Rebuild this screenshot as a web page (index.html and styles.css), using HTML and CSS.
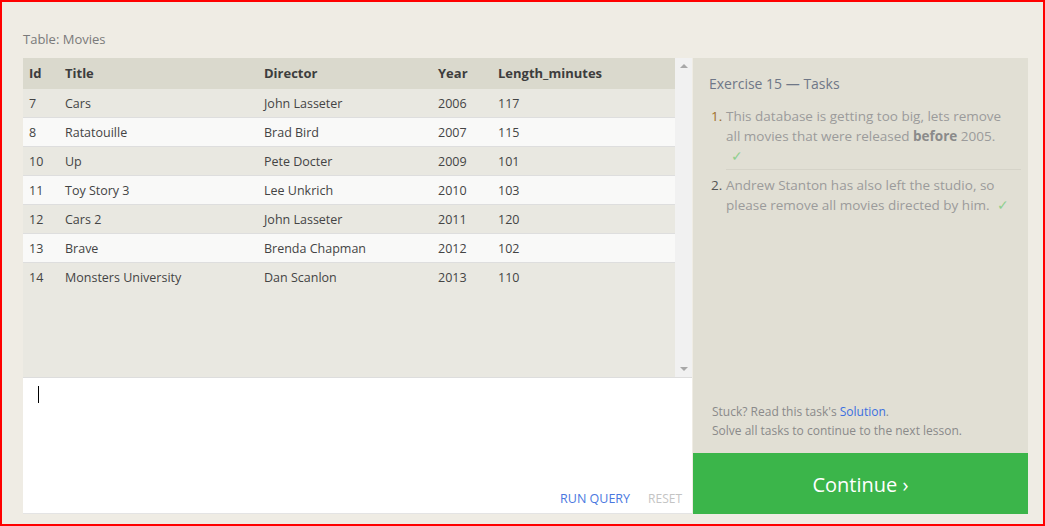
FILE: index.html
```html
<!DOCTYPE html>
<html>
<head>
<meta charset="utf-8">
<link rel="stylesheet" href="styles.css">
</head>
<body>
<div class="frame">
  <div class="layout">
    <div class="caption">Table: Movies</div>
    <div class="left">
      <div class="table-area">
        <div class="table-scroll">
          <table class="movies">
            <colgroup>
              <col class="c-id"><col class="c-title"><col class="c-dir"><col class="c-year"><col class="c-len">
            </colgroup>
            <thead>
              <tr><th>Id</th><th>Title</th><th>Director</th><th>Year</th><th>Length_minutes</th></tr>
            </thead>
            <tbody>
              <tr><td>7</td><td>Cars</td><td>John Lasseter</td><td>2006</td><td>117</td></tr>
              <tr><td>8</td><td>Ratatouille</td><td>Brad Bird</td><td>2007</td><td>115</td></tr>
              <tr><td>10</td><td>Up</td><td>Pete Docter</td><td>2009</td><td>101</td></tr>
              <tr><td>11</td><td>Toy Story 3</td><td>Lee Unkrich</td><td>2010</td><td>103</td></tr>
              <tr><td>12</td><td>Cars 2</td><td>John Lasseter</td><td>2011</td><td>120</td></tr>
              <tr><td>13</td><td>Brave</td><td>Brenda Chapman</td><td>2012</td><td>102</td></tr>
              <tr><td>14</td><td>Monsters University</td><td>Dan Scanlon</td><td>2013</td><td>110</td></tr>
            </tbody>
          </table>
        </div>
        <div class="scrollbar">
          <span class="arrow up"></span>
          <span class="arrow down"></span>
        </div>
      </div>
      <div class="editor">
        <div class="caret"></div>
        <div class="editor-actions">
          <span class="run">RUN QUERY</span>
          <span class="reset">RESET</span>
        </div>
      </div>
    </div>
    <div class="right">
      <div class="tasks">
        <div class="tasks-title">Exercise 15 — Tasks</div>
        <ol class="task-list">
          <li class="task"><span class="num num-1">1.</span><span class="task-text">This database is getting too big, lets remove all movies that were released <b>before</b> 2005. <span class="check check-wrap">✓</span></span></li>
          <li class="task"><span class="num">2.</span><span class="task-text">Andrew Stanton has also left the studio, so please remove all movies directed by him. <span class="check">✓</span></span></li>
        </ol>
        <div class="help">
          <div>Stuck? Read this task's <span class="link">Solution</span>.</div>
          <div>Solve all tasks to continue to the next lesson.</div>
        </div>
      </div>
      <div class="continue">Continue ›</div>
    </div>
  </div>
</div>
</body>
</html>
```

FILE: styles.css
```css
html, body {
  margin: 0;
  padding: 0;
}
body {
  font-family: "Open Sans", "Noto Sans", sans-serif;
  background: #efece4;
}
.frame {
  box-sizing: border-box;
  width: 1045px;
  height: 526px;
  border: 2px solid #ff0000;
  background: #efece4;
  overflow: hidden;
}
.layout {
  display: grid;
  grid-template-columns: 669px 1px 335px;
  grid-template-rows: 28px 456px;
  padding: 28px 0 0 21px;
}
.caption {
  grid-column: 1 / 4;
  font-size: 13px;
  line-height: 18px;
  color: #7a7a7a;
}
.left {
  grid-column: 1;
  grid-row: 2;
  display: flex;
  flex-direction: column;
}
.table-area {
  height: 319px;
  display: flex;
  background: #e9e8e1;
}
.table-scroll {
  width: 652px;
}
.movies {
  border-collapse: collapse;
  table-layout: fixed;
  width: 652px;
  font-size: 12.5px;
  color: #444;
}
.c-id { width: 36px; }
.c-title { width: 199px; }
.c-dir { width: 174px; }
.c-year { width: 60px; }
.c-len { width: 183px; }
.movies th {
  background: #dad9cd;
  text-align: left;
  font-weight: 700;
  color: #3d3d3d;
  height: 29px;
  padding: 0 0 2px 6px;
  font-size: 13px;
}
.movies td {
  height: 28px;
  padding: 0 0 0 6px;
  border-bottom: 1px solid #dedede;
  white-space: nowrap;
}
.movies tbody tr:nth-child(odd) td { background: #e9e8e1; }
.movies tbody tr:nth-child(even) td { background: #f9f9f8; }
.movies tbody tr:last-child td { border-bottom: none; }
.scrollbar {
  width: 17px;
  background: #f1f1f1;
  display: flex;
  flex-direction: column;
  justify-content: space-between;
  align-items: center;
  padding: 6px 0 6px;
  box-sizing: border-box;
}
.arrow {
  width: 0;
  height: 0;
  border-left: 4px solid transparent;
  border-right: 4px solid transparent;
}
.arrow.up { border-bottom: 4px solid #a8a8a8; }
.arrow.down { border-top: 4px solid #a8a8a8; }
.editor {
  flex: 1;
  background: #fff;
  border-top: 1px solid #ddd;
  border-bottom: 1px solid #e4e4e4;
  display: flex;
  flex-direction: column;
  justify-content: space-between;
  padding: 8px 10px 6px 15px;
}
.caret {
  width: 1px;
  height: 17px;
  background: #000;
}
.editor-actions {
  display: flex;
  justify-content: flex-end;
  gap: 18px;
  font-size: 12.5px;
  line-height: 16px;
}
.run { color: #4a78e0; }
.reset { color: #c4c4c4; font-size: 12px; }
.right {
  grid-column: 3;
  grid-row: 2;
  display: flex;
  flex-direction: column;
}
.tasks {
  flex: 1;
  background: #e1dfd4;
  padding: 17px 7px 0 16px;
  display: flex;
  flex-direction: column;
}
.tasks-title {
  font-size: 14px;
  line-height: 18px;
  color: #6f7787;
}
.task-list {
  list-style: none;
  margin: 13px 0 0;
  padding: 0;
  font-size: 13.5px;
  line-height: 20px;
  color: #9b9b9b;
}
.task {
  display: flex;
}
.task + .task {
  margin-top: 5px;
}
.task:first-child .task-text {
  border-bottom: 1px solid #d5d3c8;
  padding-bottom: 3px;
}
.num {
  width: 15px;
  flex: none;
  padding-left: 2px;
  color: #555;
}
.num-1 { color: #a0702c; }
.task-text {
  flex: 1;
  padding-right: 9px;
}
.task-text b { color: #8a8a8a; }
.check {
  color: #8fcf8f;
  margin-left: 4px;
}
.check-wrap {
  margin-left: 0;
  padding-left: 5px;
}
.help {
  margin-top: auto;
  margin-bottom: 13px;
  padding-left: 3px;
  font-size: 12px;
  line-height: 19px;
  color: #8a8a8a;
}
.link { color: #3b6fe0; }
.continue {
  height: 61px;
  background: #3bb54a;
  color: #fff;
  font-size: 20px;
  display: flex;
  align-items: center;
  justify-content: center;
  padding-top: 1px;
  box-sizing: border-box;
}
```
